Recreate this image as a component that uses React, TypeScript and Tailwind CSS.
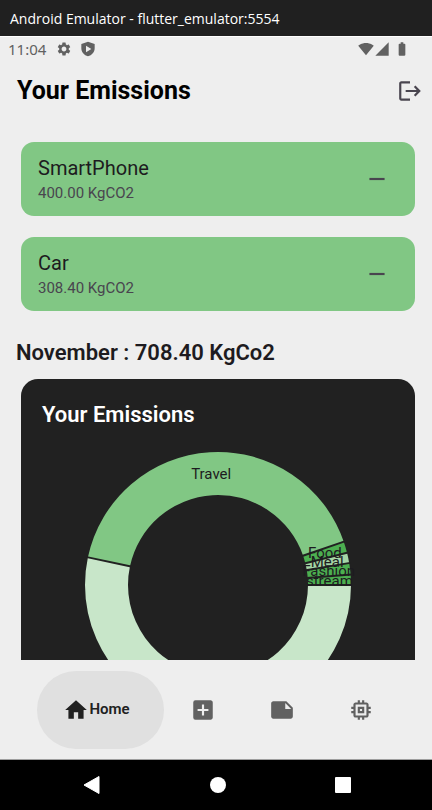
import {
  MdAddBox,
  MdBatteryFull,
  MdHome,
  MdLogout,
  MdMemory,
  MdNote,
  MdRemove,
  MdSettings,
  MdSignalCellular4Bar,
  MdSignalWifi4Bar,
} from "react-icons/md";

type Emission = { name: string; amount: string };
type Slice = { label: string; from: number; to: number; color: string };

const emissions: Emission[] = [
  { name: "SmartPhone", amount: "400.00 KgCO2" },
  { name: "Car", amount: "308.40 KgCO2" },
];

// Angles in degrees, clockwise from three o'clock.
const slices: Slice[] = [
  { label: "", from: 0, to: 192, color: "#c8e6c9" },
  { label: "Travel", from: 192, to: 341, color: "#81c784" },
  { label: "Food", from: 341, to: 346, color: "#4caf50" },
  { label: "Meal", from: 346, to: 350.5, color: "#a5d6a7" },
  { label: "Fashion", from: 350.5, to: 355.5, color: "#4caf50" },
  { label: "stream", from: 355.5, to: 360, color: "#4caf50" },
];

const CENTER = 134;
const OUTER = 133;
const INNER = 90;

function point(radius: number, degrees: number) {
  const a = (degrees * Math.PI) / 180;
  return { x: CENTER + radius * Math.cos(a), y: CENTER + radius * Math.sin(a) };
}

function ring({ from, to }: Slice) {
  const large = to - from > 180 ? 1 : 0;
  const a = point(OUTER, from);
  const b = point(OUTER, to);
  const c = point(INNER, to);
  const d = point(INNER, from);
  return `M${a.x} ${a.y}A${OUTER} ${OUTER} 0 ${large} 1 ${b.x} ${b.y}L${c.x} ${c.y}A${INNER} ${INNER} 0 ${large} 0 ${d.x} ${d.y}Z`;
}

function DonutChart() {
  return (
    <svg viewBox="0 0 268 268" className="mx-auto block size-[268px] shrink-0 overflow-visible" role="img" aria-label="Emissions by category">
      {slices.map((s) => (
        <path key={s.from} d={ring(s)} fill={s.color} />
      ))}
      {slices.map((s) => {
        const a = point(INNER - 1, s.from);
        const b = point(OUTER + 1, s.from);
        return <line key={s.from} x1={a.x} y1={a.y} x2={b.x} y2={b.y} stroke="#212121" strokeWidth="2" />;
      })}
      {slices.map((s) => {
        const p = point((INNER + OUTER) / 2, (s.from + s.to) / 2);
        return (
          <text key={s.from} x={p.x} y={p.y + 5} textAnchor="middle" fill="#1d1b20" className="text-[15px]">
            {s.label}
          </text>
        );
      })}
    </svg>
  );
}

function PlayShield() {
  return (
    <svg viewBox="0 0 24 24" className="size-4" fill="currentColor" aria-hidden="true">
      <path fillRule="evenodd" d="M12 1 2 4.500V11c0 5.600 4.200 10.600 10 12 5.800-1.400 10-6.400 10-12V4.500L12 1ZM9 7l8 5-8 5V7Z" />
    </svg>
  );
}

function EmissionCard({ name, amount }: Emission) {
  return (
    <li className="flex h-[74px] items-center justify-between rounded-[13px] bg-[#81c784] pr-[25px] pl-[17px]">
      <div>
        <h2 className="text-[20px] leading-7 text-[#1d1b20]">{name}</h2>
        <p className="text-[15px] leading-[22px] text-[#49454f]">{amount}</p>
      </div>
      <button type="button" aria-label={`Remove ${name}`} className="text-[#49454f]">
        <MdRemove className="size-[26px]" />
      </button>
    </li>
  );
}

export default function App() {
  return (
    <div className="flex h-screen flex-col overflow-hidden bg-[#eeeeee] font-[Roboto,sans-serif]">
      <div className="flex h-9 shrink-0 items-center bg-[#202020] px-2.5 font-['Open_Sans','Noto_Sans',sans-serif] text-[14px] text-white">
        Android Emulator - flutter_emulator:5554
      </div>

      <div className="flex h-6 shrink-0 items-center justify-between border-t border-white pr-[22px] pl-2 text-[#616161]">
        <div className="flex items-center gap-2">
          <span className="mr-0.5 font-['Noto_Sans',sans-serif] text-[15px] leading-6">11:04</span>
          <MdSettings className="size-4" />
          <PlayShield />
        </div>
        <div className="flex items-center">
          <MdSignalWifi4Bar className="size-4" />
          <MdSignalCellular4Bar className="mr-1 size-4" />
          <MdBatteryFull className="size-4" />
        </div>
      </div>

      <header className="flex h-[62px] shrink-0 items-center justify-between pr-[9px] pl-[17px]">
        <h1 className="text-[25px] font-bold text-black">Your Emissions</h1>
        <button type="button" aria-label="Log out" className="text-[#49454f]">
          <MdLogout className="size-[26px]" />
        </button>
      </header>

      <main className="flex min-h-0 flex-1 flex-col overflow-hidden pt-5">
        <ul className="mr-[17px] ml-[21px] flex shrink-0 flex-col gap-[21px]">
          {emissions.map((e) => (
            <EmissionCard key={e.name} {...e} />
          ))}
        </ul>
        <p className="mt-7 mb-3 pl-4 text-[22px] leading-7 font-semibold text-[#1d1b20]">November : 708.40 KgCo2</p>
        <section className="mr-[17px] ml-[21px] shrink-0 rounded-[17px] bg-[#212121] pt-[22px] pb-6">
          <h2 className="mb-[22px] pl-[21px] text-[22px] leading-7 font-semibold text-white">Your Emissions</h2>
          <DonutChart />
        </section>
      </main>

      <nav className="flex h-[100px] shrink-0 items-center border-b border-[#9e9e9e] pr-8 pl-[37px]">
        <button type="button" className="flex h-[78px] w-[127px] items-center justify-center rounded-[39px] bg-[#e0e0e0] pr-2 text-[15px] font-semibold text-[#212121]">
          <MdHome className="size-[26px]" />
          Home
        </button>
        <div className="flex flex-1 justify-around text-[#616161]">
          <button type="button" aria-label="Add emission">
            <MdAddBox className="size-[26px]" />
          </button>
          <button type="button" aria-label="Notes">
            <MdNote className="size-[26px]" />
          </button>
          <button type="button" aria-label="Devices">
            <MdMemory className="size-[26px]" />
          </button>
        </div>
      </nav>

      <div className="flex h-[50px] shrink-0 items-center justify-around bg-black pr-[26px] pl-7 text-white">
        <button type="button" aria-label="Back">
          <svg viewBox="0 0 18 18" className="size-[18px]" fill="currentColor">
            <path d="M16 0.500v17L1 9Z" stroke="currentColor" strokeLinejoin="round" />
          </svg>
        </button>
        <button type="button" aria-label="Home screen" className="size-4 rounded-full bg-white" />
        <button type="button" aria-label="Recent apps" className="size-4 rounded-[1px] bg-white" />
      </div>
    </div>
  );
}
